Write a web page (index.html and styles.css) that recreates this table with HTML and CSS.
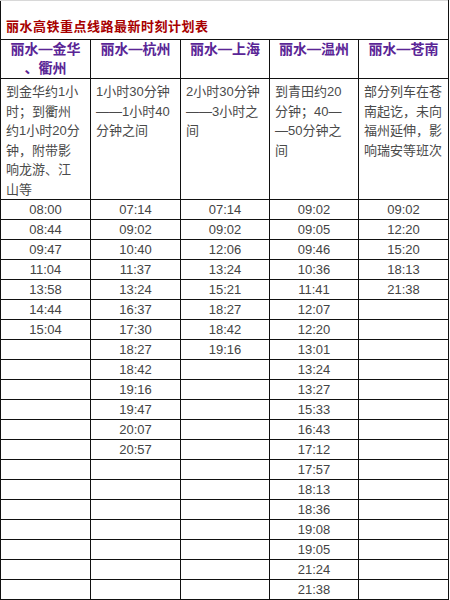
FILE: index.html
```html
<!DOCTYPE html>
<html lang="zh">
<head>
<meta charset="utf-8">
<link rel="stylesheet" href="styles.css">
</head>
<body>
<table class="tt">
<colgroup><col class="c1"><col class="c2"><col class="c3"><col class="c4"><col class="c5"></colgroup>
<tr class="title-row"><td colspan="5" class="title">丽水高铁重点线路最新时刻计划表</td></tr>
<tr class="head-row">
<td class="hd">丽水—金华<br>、衢州</td>
<td class="hd">丽水—杭州</td>
<td class="hd">丽水—上海</td>
<td class="hd">丽水—温州</td>
<td class="hd">丽水—苍南</td>
</tr>
<tr class="desc-row">
<td class="desc">到金华约1小<br>时；到衢州<br>约1小时20分<br>钟，附带影<br>响龙游、江<br>山等</td>
<td class="desc">1小时30分钟<br>——1小时40<br>分钟之间</td>
<td class="desc">2小时30分钟<br>——3小时之<br>间</td>
<td class="desc">到青田约20<br>分钟；40—<br>—50分钟之<br>间</td>
<td class="desc">部分列车在苍<br>南起讫，未向<br>福州延伸，影<br>响瑞安等班次</td>
</tr>
<tr><td>08:00</td><td>07:14</td><td>07:14</td><td>09:02</td><td>09:02</td></tr>
<tr><td>08:44</td><td>09:02</td><td>09:02</td><td>09:05</td><td>12:20</td></tr>
<tr><td>09:47</td><td>10:40</td><td>12:06</td><td>09:46</td><td>15:20</td></tr>
<tr><td>11:04</td><td>11:37</td><td>13:24</td><td>10:36</td><td>18:13</td></tr>
<tr><td>13:58</td><td>13:24</td><td>15:21</td><td>11:41</td><td>21:38</td></tr>
<tr><td>14:44</td><td>16:37</td><td>18:27</td><td>12:07</td><td></td></tr>
<tr><td>15:04</td><td>17:30</td><td>18:42</td><td>12:20</td><td></td></tr>
<tr><td></td><td>18:27</td><td>19:16</td><td>13:01</td><td></td></tr>
<tr><td></td><td>18:42</td><td></td><td>13:24</td><td></td></tr>
<tr><td></td><td>19:16</td><td></td><td>13:27</td><td></td></tr>
<tr><td></td><td>19:47</td><td></td><td>15:33</td><td></td></tr>
<tr><td></td><td>20:07</td><td></td><td>16:43</td><td></td></tr>
<tr><td></td><td>20:57</td><td></td><td>17:12</td><td></td></tr>
<tr><td></td><td></td><td></td><td>17:57</td><td></td></tr>
<tr><td></td><td></td><td></td><td>18:13</td><td></td></tr>
<tr><td></td><td></td><td></td><td>18:36</td><td></td></tr>
<tr><td></td><td></td><td></td><td>19:08</td><td></td></tr>
<tr><td></td><td></td><td></td><td>19:05</td><td></td></tr>
<tr><td></td><td></td><td></td><td>21:24</td><td></td></tr>
<tr><td></td><td></td><td></td><td>21:38</td><td></td></tr>
</table>
</body>
</html>
```
FILE: styles.css
```css
html, body {
  margin: 0;
  padding: 0;
  background: #fff;
}
.tt {
  border-collapse: collapse;
  table-layout: fixed;
  width: 449px;
  font-family: "Liberation Sans", "Noto Sans CJK SC", sans-serif;
  font-size: 13px;
  color: #444;
}
.c1 { width: 90px; }
.c2 { width: 90px; }
.c3 { width: 89px; }
.c4 { width: 89px; }
.c5 { width: 90px; }
.tt td {
  border: 1px solid #111;
  padding: 0;
  height: 19px;
  line-height: 18px;
  text-align: center;
  vertical-align: middle;
  overflow: hidden;
}
.tt td.title {
  border-top: 1px solid #d8d8d8;
  height: 39px;
  text-align: left;
  vertical-align: bottom;
  padding: 0 0 2px 5px;
  box-sizing: border-box;
  color: #a80000;
  font-weight: bold;
  font-size: 13px;
  letter-spacing: 0.5px;
  line-height: 20px;
  white-space: nowrap;
}
.tt td.hd {
  height: 39px;
  box-sizing: border-box;
  vertical-align: top;
  color: #5a2596;
  font-weight: bold;
  font-size: 14px;
  line-height: 19px;
  white-space: nowrap;
}
.tt td.desc {
  height: 119px;
  vertical-align: top;
  text-align: left;
  padding: 3px 0 0 5px;
  box-sizing: border-box;
  line-height: 19.5px;
  white-space: nowrap;
  color: #4a4a4a;
}
```
